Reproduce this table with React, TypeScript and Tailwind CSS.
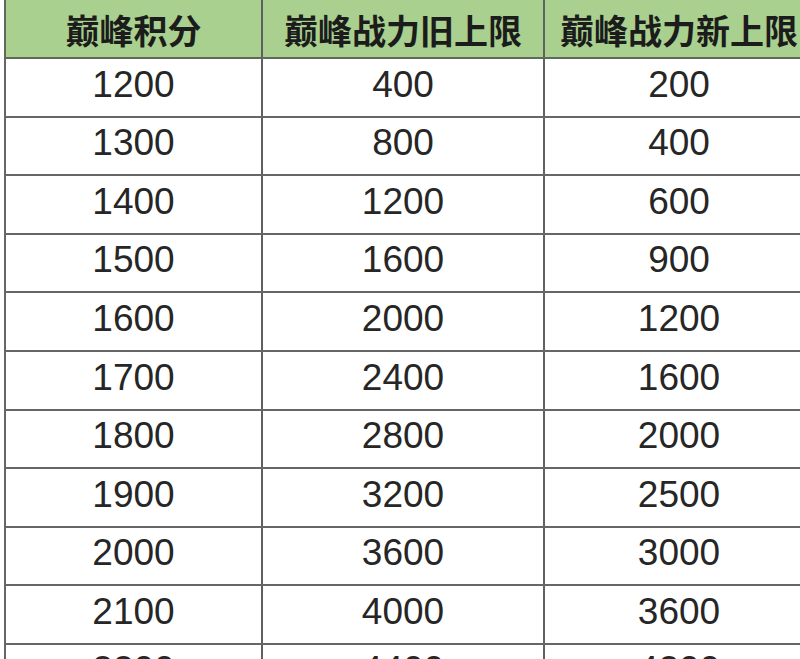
const rows: [string, string, string][] = [
  ['1200', '400', '200'],
  ['1300', '800', '400'],
  ['1400', '1200', '600'],
  ['1500', '1600', '900'],
  ['1600', '2000', '1200'],
  ['1700', '2400', '1600'],
  ['1800', '2800', '2000'],
  ['1900', '3200', '2500'],
  ['2000', '3600', '3000'],
  ['2100', '4000', '3600'],
  ['2200', '4400', '4200'],
];

const headers = ['巅峰积分', '巅峰战力旧上限', '巅峰战力新上限'];

export default function App() {
  return (
    <div className="w-[800px] h-[659px] overflow-hidden bg-white pl-[4px]">
      <div className="w-[811px]">
        <div className="flex h-[59px] bg-[#a9d08e] border-l-2 border-b-2 border-[#5f6a58]">
          {headers.map((h, i) => (
            <div
              key={h}
              className={`flex items-center justify-center whitespace-nowrap pt-[1px] text-[34px] font-bold text-[#1c1c1c] border-r-2 border-[#606060] ${
                i === 0 ? 'w-[257px]' : i === 1 ? 'w-[282px]' : 'w-[270px]'
              }`}
              style={{ fontFamily: '"Noto Sans CJK SC", "Noto Sans", sans-serif' }}
            >
              {h}
            </div>
          ))}
        </div>
        {rows.map((r) => (
          <div key={r[0]} className="flex h-[58.6px] border-l-2 border-b-2 border-[#666666]">
            {r.map((v, i) => (
              <div
                key={i}
                className={`flex items-center justify-center pb-[6px] text-[37px] text-[#262626] border-r-2 border-[#606060] ${
                  i === 0 ? 'w-[257px]' : i === 1 ? 'w-[282px]' : 'w-[270px]'
                }`}
                style={{ fontFamily: '"Liberation Sans", Arial, sans-serif' }}
              >
                {v}
              </div>
            ))}
          </div>
        ))}
      </div>
    </div>
  );
}
